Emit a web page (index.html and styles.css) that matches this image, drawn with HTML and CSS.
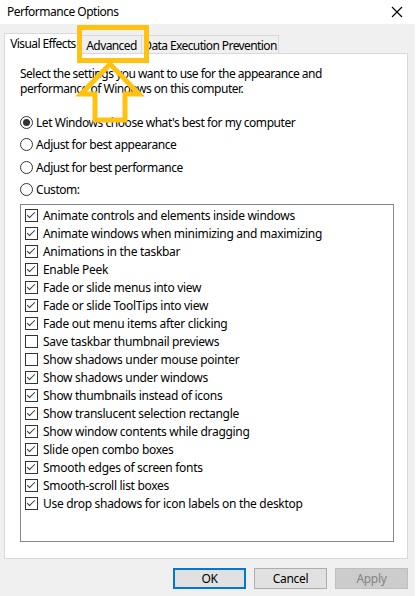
FILE: index.html
```html
<!DOCTYPE html>
<html>
<head>
<meta charset="utf-8">
<title>Performance Options</title>
<link rel="stylesheet" href="styles.css">
</head>
<body>
<div class="dialog">
  <div class="titlebar">
    <span class="title">Performance Options</span>
    <svg class="close" width="12" height="12" viewBox="0 0 12 12"><path d="M1 1 L11 11 M11 1 L1 11" stroke="#000" stroke-width="1.1" fill="none"/></svg>
  </div>
  <div class="tabs">
    <div class="tab selected tab-ve">Visual Effects</div>
    <div class="tab tab-adv">Advanced</div>
    <div class="tab tab-dep">Data Execution Prevention</div>
  </div>
  <div class="panel">
    <p class="intro">Select the settings you want to use for the appearance and<br>performance of Windows on this computer.</p>
    <div class="radios">
      <div class="radio-row"><span class="radio checked"></span><span>Let Windows choose what's best for my computer</span></div>
      <div class="radio-row"><span class="radio"></span><span>Adjust for best appearance</span></div>
      <div class="radio-row"><span class="radio"></span><span>Adjust for best performance</span></div>
      <div class="radio-row"><span class="radio"></span><span>Custom:</span></div>
    </div>
    <div class="listbox">
      <div class="item"><span class="cb on"></span>Animate controls and elements inside windows</div>
      <div class="item"><span class="cb on"></span>Animate windows when minimizing and maximizing</div>
      <div class="item"><span class="cb on"></span>Animations in the taskbar</div>
      <div class="item"><span class="cb on"></span>Enable Peek</div>
      <div class="item"><span class="cb on"></span>Fade or slide menus into view</div>
      <div class="item"><span class="cb on"></span>Fade or slide ToolTips into view</div>
      <div class="item"><span class="cb on"></span>Fade out menu items after clicking</div>
      <div class="item"><span class="cb"></span>Save taskbar thumbnail previews</div>
      <div class="item"><span class="cb"></span>Show shadows under mouse pointer</div>
      <div class="item"><span class="cb on"></span>Show shadows under windows</div>
      <div class="item"><span class="cb on"></span>Show thumbnails instead of icons</div>
      <div class="item"><span class="cb on"></span>Show translucent selection rectangle</div>
      <div class="item"><span class="cb on"></span>Show window contents while dragging</div>
      <div class="item"><span class="cb on"></span>Slide open combo boxes</div>
      <div class="item"><span class="cb on"></span>Smooth edges of screen fonts</div>
      <div class="item"><span class="cb on"></span>Smooth-scroll list boxes</div>
      <div class="item"><span class="cb on"></span>Use drop shadows for icon labels on the desktop</div>
    </div>
  </div>
  <div class="buttons">
    <button class="btn default">OK</button>
    <button class="btn">Cancel</button>
    <button class="btn disabled">Apply</button>
  </div>
  <svg class="annotation" width="418" height="130" viewBox="0 0 418 130">
    <rect x="79.5" y="27.5" width="67" height="33" fill="none" stroke="#ffc20e" stroke-width="5"/>
    <polygon points="110,64 81,94 95,94 95,120 125,120 125,94 139,94" fill="none" stroke="#ffc20e" stroke-width="5" stroke-linejoin="miter"/>
  </svg>
</div>
</body>
</html>
```
FILE: styles.css
```css
html, body {
  margin: 0;
  padding: 0;
  background: #ffffff;
}
body {
  font-family: "Noto Sans", "Open Sans", sans-serif;
  font-size: 12px;
  letter-spacing: -0.3px;
  color: #000;
}
.dialog {
  position: relative;
  width: 415px;
  height: 596px;
  background: #f0f0f0;
}
.titlebar {
  height: 24px;
  background: #fff;
  display: flex;
  align-items: center;
  justify-content: space-between;
  padding: 0 12px 0 7px;
}
.title {
  font-size: 12px;
  line-height: 16px;
  letter-spacing: -0.5px;
}
.close {
  display: block;
}
.tabs {
  height: 29px;
  display: flex;
  align-items: flex-end;
  padding-left: 4px;
  position: relative;
  z-index: 2;
}
.tab {
  box-sizing: border-box;
  height: 18px;
  border: 1px solid #d9d9d9;
  border-bottom: none;
  background: #f0f0f0;
  display: flex;
  align-items: center;
  justify-content: center;
  line-height: 15px;
  white-space: nowrap;
  letter-spacing: -0.6px;
  padding-top: 1px;
}
.tab.selected {
  height: 21px;
  background: #fff;
  margin-bottom: -1px;
  padding-top: 0;
  padding-bottom: 2px;
}
.tab-ve { width: 78px; }
.tab-adv { width: 60px; border-left: none; }
.tab-dep { width: 137px; border-left: none; }
.panel {
  box-sizing: border-box;
  margin-left: 4px;
  width: 404px;
  height: 506px;
  background: #fff;
  border: 1px solid #d9d9d9;
  padding: 12px 0 0 15px;
  position: relative;
  z-index: 1;
}
.intro {
  margin: 0;
  line-height: 15px;
  letter-spacing: -0.5px;
}
.radios {
  margin-top: 15px;
  letter-spacing: -0.45px;
}
.radio-row {
  height: 22.5px;
  display: flex;
  align-items: center;
  gap: 3px;
}
.radio {
  box-sizing: border-box;
  width: 13px;
  height: 13px;
  border: 1px solid #333;
  border-radius: 50%;
  display: flex;
  align-items: center;
  justify-content: center;
  flex: none;
}
.radio.checked::after {
  content: "";
  width: 7px;
  height: 7px;
  border-radius: 50%;
  background: #333;
}
.listbox {
  box-sizing: border-box;
  margin-top: 3px;
  width: 374px;
  height: 338px;
  border: 1px solid #828790;
  padding: 1px 0 0 4px;
}
.item {
  height: 18px;
  display: flex;
  align-items: center;
  gap: 5px;
  white-space: nowrap;
}
.cb {
  box-sizing: border-box;
  width: 13px;
  height: 13px;
  border: 1px solid #333;
  flex: none;
  position: relative;
}
.cb.on::after {
  content: "";
  position: absolute;
  left: 3px;
  top: 0px;
  width: 3px;
  height: 7px;
  border-right: 1px solid #333;
  border-bottom: 1px solid #333;
  transform: rotate(45deg);
}
.buttons {
  display: flex;
  justify-content: flex-end;
  gap: 8px;
  padding-right: 7px;
  margin-top: 9px;
}
.btn {
  box-sizing: border-box;
  width: 73px;
  height: 21px;
  margin: 0;
  padding: 0;
  font-family: inherit;
  font-size: 12px;
  letter-spacing: inherit;
  color: #000;
  background: #e1e1e1;
  border: 1px solid #adadad;
  border-radius: 0;
}
.btn.default {
  border: 2px solid #0078d7;
}
.btn.disabled {
  background: #cccccc;
  border-color: #bfbfbf;
  color: #838383;
}
.annotation {
  position: absolute;
  left: 0;
  top: 0;
  z-index: 5;
  pointer-events: none;
}
```
